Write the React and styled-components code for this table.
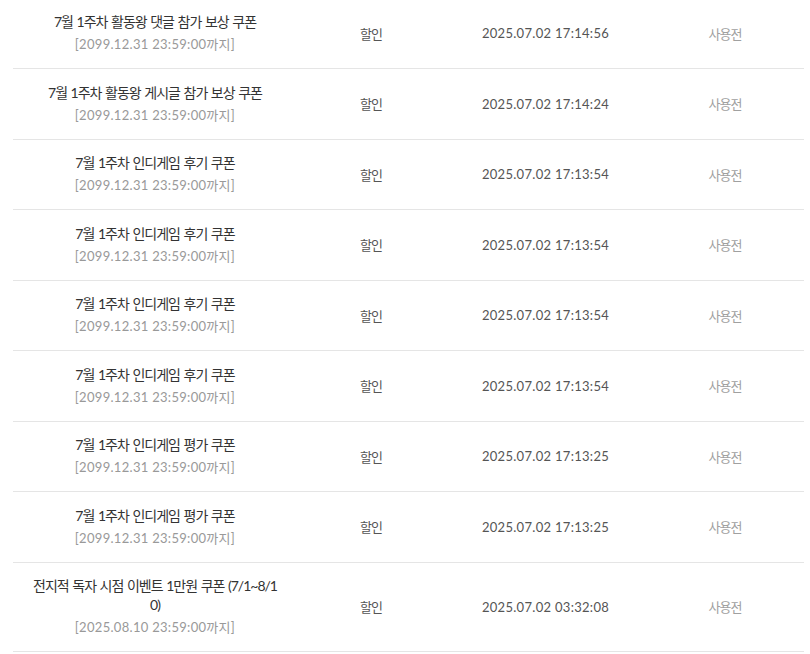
import React from 'react'
import styled, {createGlobalStyle} from 'styled-components'

const coupons = [
    {title: '7월 1주차 활동왕 댓글 참가 보상 쿠폰', until: '2099.12.31 23:59:00', kind: '할인', issued: '2025.07.02 17:14:56', state: '사용전'},
    {title: '7월 1주차 활동왕 게시글 참가 보상 쿠폰', until: '2099.12.31 23:59:00', kind: '할인', issued: '2025.07.02 17:14:24', state: '사용전'},
    {title: '7월 1주차 인디게임 후기 쿠폰', until: '2099.12.31 23:59:00', kind: '할인', issued: '2025.07.02 17:13:54', state: '사용전'},
    {title: '7월 1주차 인디게임 후기 쿠폰', until: '2099.12.31 23:59:00', kind: '할인', issued: '2025.07.02 17:13:54', state: '사용전'},
    {title: '7월 1주차 인디게임 후기 쿠폰', until: '2099.12.31 23:59:00', kind: '할인', issued: '2025.07.02 17:13:54', state: '사용전'},
    {title: '7월 1주차 인디게임 후기 쿠폰', until: '2099.12.31 23:59:00', kind: '할인', issued: '2025.07.02 17:13:54', state: '사용전'},
    {title: '7월 1주차 인디게임 평가 쿠폰', until: '2099.12.31 23:59:00', kind: '할인', issued: '2025.07.02 17:13:25', state: '사용전'},
    {title: '7월 1주차 인디게임 평가 쿠폰', until: '2099.12.31 23:59:00', kind: '할인', issued: '2025.07.02 17:13:25', state: '사용전'},
    {title: '전지적 독자 시점 이벤트 1만원 쿠폰 (7/1~8/10)', until: '2025.08.10 23:59:00', kind: '할인', issued: '2025.07.02 03:32:08', state: '사용전'},
];

export default function App () {
    return (
        <>
            <GlobalStyle/>
            <Wrapper>
                {coupons.map((c, i) => (
                    <Row key={i}>
                        <TitleCell>
                            <Title>{c.title}</Title>
                            <Until>[{c.until}까지]</Until>
                        </TitleCell>
                        <Cell>{c.kind}</Cell>
                        <Issued>{c.issued}</Issued>
                        <Cell muted>{c.state}</Cell>
                    </Row>
                ))}
            </Wrapper>
        </>
    )
}

const GlobalStyle = createGlobalStyle`
    body {
        margin: 0;
        background: #fff;
        font-family: Lato, "Noto Sans CJK KR", sans-serif;
    }
`;

const Wrapper = styled.div`
    width: 791px;
    margin: -1.5px 0 0 13px;
`;

const Row = styled.div`
    display: grid;
    grid-template-columns: 284px 148px 201px 158px;
    border-bottom: 1px solid #e5e5e5;
`;

const TitleCell = styled.div`
    padding: 13.75px 18px;
    text-align: center;
    word-break: break-all;
`;

const Title = styled.div`
    font-size: 14px;
    line-height: 19px;
    letter-spacing: -1px;
    word-spacing: 1px;
    color: #333;
`;

const Until = styled.div`
    margin-top: 4px;
    font-size: 13px;
    line-height: 19px;
    letter-spacing: 0.3px;
    color: #999;
    white-space: nowrap;
`;

const Cell = styled.div`
    display: flex;
    align-items: center;
    justify-content: center;
    font-size: 13px;
    letter-spacing: -1px;
    color: ${props => props.muted ? '#a0a0a0' : '#555'};
`;

const Issued = styled(Cell)`
    letter-spacing: 0.3px;
`;
